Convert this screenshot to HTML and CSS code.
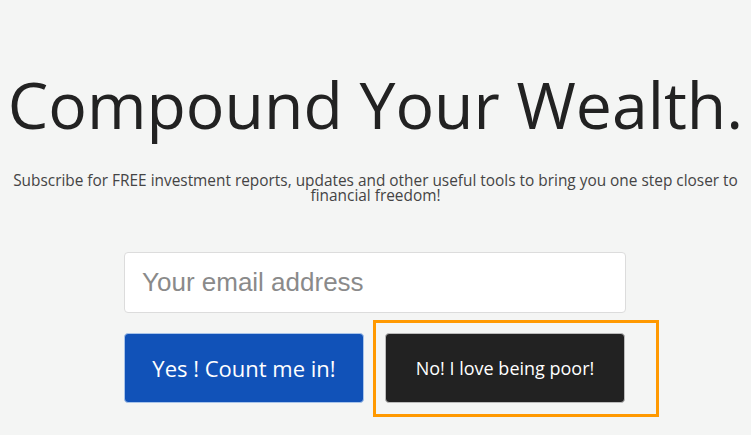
FILE: index.html
```html
<!DOCTYPE html>
<html>
<head>
<meta charset="utf-8">
<link rel="stylesheet" href="styles.css">
</head>
<body>
<div class="page">
  <h1 class="title">Compound Your Wealth.</h1>
  <p class="sub">Subscribe for FREE investment reports, updates and other useful tools to bring you one step closer to financial freedom!</p>
  <form class="form">
    <input class="email" type="text" placeholder="Your email address">
    <div class="buttons">
      <button type="button" class="btn yes">Yes ! Count me in!</button>
      <button type="button" class="btn no">No! I love being poor!</button>
    </div>
  </form>
  <div class="highlight"></div>
</div>
</body>
</html>
```
FILE: styles.css
```css
html, body { margin: 0; padding: 0; }
body {
  background: #f4f5f4;
  font-family: "Open Sans", sans-serif;
  color: #222;
  width: 751px;
  height: 435px;
  overflow: hidden;
}
.page {
  position: relative;
  padding-top: 64px;
  text-align: center;
}
.title {
  margin: 0;
  font-weight: 400;
  font-size: 64.3px;
  line-height: 80px;
  color: #222;
}
.sub {
  margin: 29px 6px 0;
  font-size: 15.4px;
  line-height: 15px;
  color: #444;
}
.form {
  width: 502px;
  margin: 49px auto 0 124px;
  text-align: left;
}
.email {
  box-sizing: border-box;
  display: block;
  width: 502px;
  height: 61px;
  border: 1px solid #dcdcdc;
  border-radius: 4px;
  background: #fff;
  padding: 0 17px;
  font-family: "Liberation Sans", Arial, sans-serif;
  font-size: 26px;
  color: #333;
  outline: none;
}
.email::placeholder { color: #8a8a8a; }
.buttons {
  display: flex;
  gap: 21px;
  margin-top: 20px;
}
.btn {
  box-sizing: border-box;
  width: 240px;
  height: 70px;
  border: 1px solid transparent;
  border-radius: 4px;
  font-family: "Open Sans", sans-serif;
  color: #fff;
  padding: 0;
}
.yes {
  background: #1152b8;
  border-color: #a8c4ea;
  font-size: 22px;
}
.no {
  background: #222;
  border-color: #bbb;
  font-size: 18px;
}
.highlight {
  position: absolute;
  left: 373px;
  top: 320px;
  width: 280px;
  height: 91px;
  border: 3px solid #ff9900;
}
```
